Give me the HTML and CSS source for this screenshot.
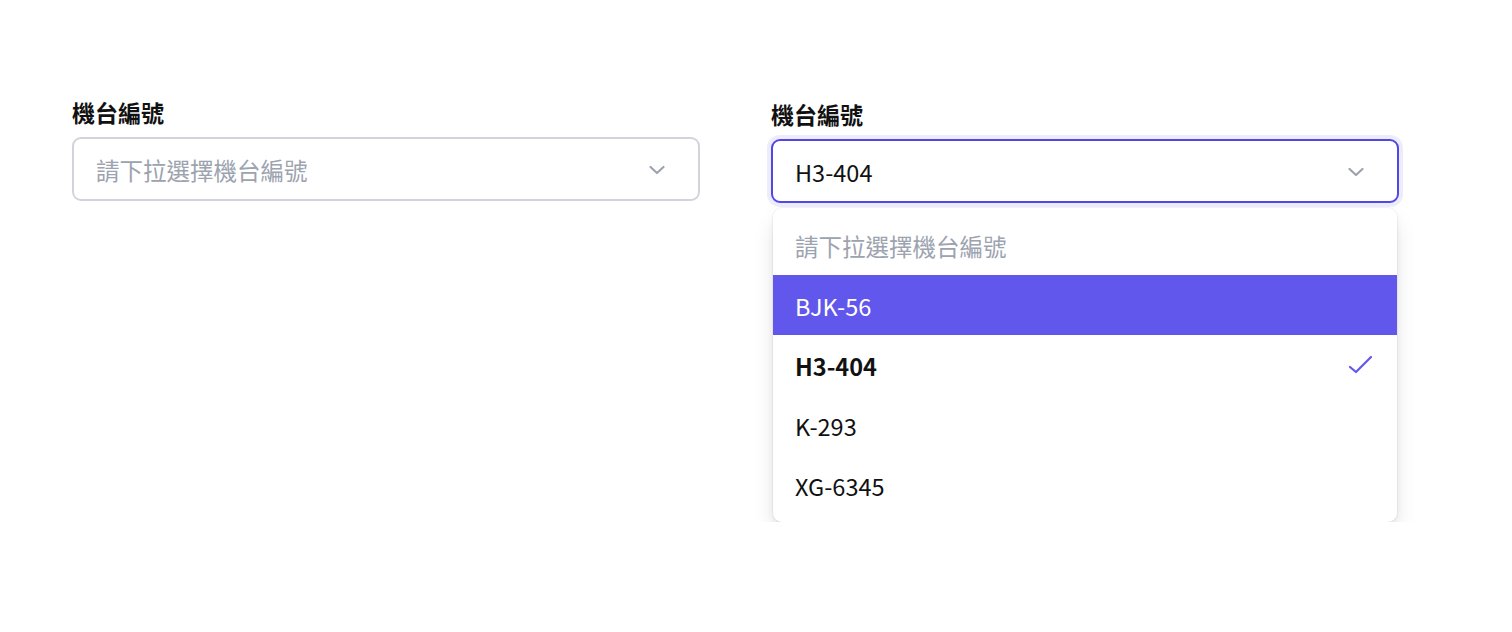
FILE: index.html
```html
<!DOCTYPE html>
<html lang="zh-Hant">
<head>
<meta charset="utf-8">
<link rel="stylesheet" href="styles.css">
</head>
<body>
<div class="page">
  <div class="field">
    <div class="label">機台編號</div>
    <div class="select">
      <span class="placeholder">請下拉選擇機台編號</span>
      <svg class="chev" width="28" height="28" viewBox="0 0 28 28"><polyline points="7.5,11 14,17 20.5,11" fill="none" stroke="#9ca3af" stroke-width="2.2" stroke-linecap="round" stroke-linejoin="round"/></svg>
    </div>
  </div>
  <div class="field field-open">
    <div class="label">機台編號</div>
    <div class="select select-focus">
      <span class="value">H3-404</span>
      <svg class="chev" width="28" height="28" viewBox="0 0 28 28"><polyline points="7.5,11 14,17 20.5,11" fill="none" stroke="#9ca3af" stroke-width="2.2" stroke-linecap="round" stroke-linejoin="round"/></svg>
    </div>
    <ul class="menu">
      <li class="opt opt-placeholder">請下拉選擇機台編號</li>
      <li class="opt opt-active">BJK-56</li>
      <li class="opt opt-selected">H3-404
        <svg class="check" width="28" height="22" viewBox="0 0 28 22"><polyline points="4,12 10,17 25,2" fill="none" stroke="#6157ec" stroke-width="2.2" stroke-linecap="round" stroke-linejoin="round"/></svg>
      </li>
      <li class="opt">K-293</li>
      <li class="opt">XG-6345</li>
    </ul>
  </div>
</div>
</body>
</html>
```

FILE: styles.css
```css
* { box-sizing: border-box; }
html, body { margin: 0; padding: 0; background: #ffffff; }
body {
  font-family: "Noto Sans CJK TC", "Noto Sans", sans-serif;
  color: #111827;
}
.page {
  display: grid;
  grid-template-columns: 628px 628px;
  column-gap: 71px;
  padding: 96px 0 0 72px;
  align-items: start;
}
.field { display: flex; flex-direction: column; position: relative; }
.field-open { margin-top: 2px; }
.label {
  font-size: 23px;
  line-height: 32px;
  font-weight: 700;
  color: #111111;
  margin-bottom: 9px;
}
.select {
  height: 64px;
  border: 2px solid #d1d5db;
  border-radius: 9px;
  display: flex;
  align-items: center;
  justify-content: space-between;
  padding: 1px 27px 0 22px;
  background: #fff;
}
.select-focus {
  border-color: #5346e6;
  box-shadow: 0 0 0 4px rgba(99, 102, 241, 0.12);
}
.placeholder { font-size: 23.5px; color: #9ca3af; line-height: 32px; }
.value { font-size: 23.5px; color: #111111; line-height: 32px; }
.chev { display: block; }
.menu {
  list-style: none;
  margin: 5px 2px 0 2px;
  padding: 7px 0;
  background: #fff;
  border-radius: 9px;
  box-shadow: 0 0 0 1px rgba(0, 0, 0, 0.04), 0 12px 24px -4px rgba(0, 0, 0, 0.14), 0 4px 10px -2px rgba(0, 0, 0, 0.07);
}
.opt {
  height: 60px;
  display: flex;
  align-items: center;
  justify-content: space-between;
  padding: 1px 23px 0 22px;
  font-size: 23.5px;
  color: #111111;
}
.opt-placeholder { color: #9ca3af; }
.opt-active { background: #6157ec; color: #ffffff; }
.opt-selected { font-weight: 700; }
.check { display: block; }
```
